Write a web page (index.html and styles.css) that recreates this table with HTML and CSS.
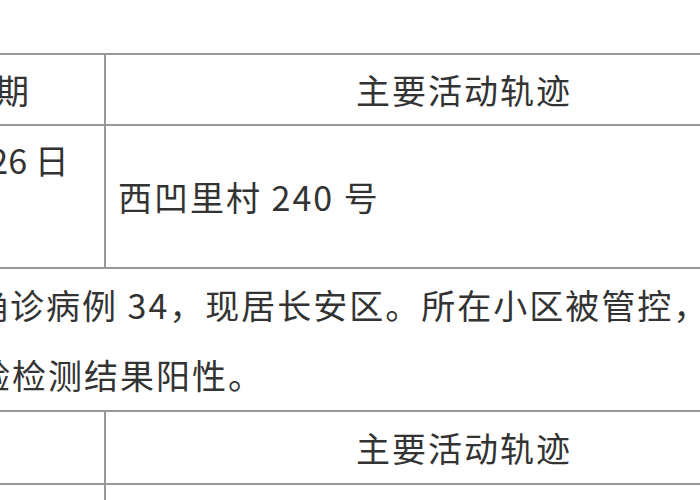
FILE: index.html
```html
<!DOCTYPE html>
<html lang="zh-CN">
<head>
<meta charset="utf-8">
<link rel="stylesheet" href="styles.css">
</head>
<body>
<div class="page">
  <table class="track">
    <colgroup>
      <col class="col-date">
      <col class="col-track">
    </colgroup>
    <tr class="head">
      <th>日期</th>
      <th>主要活动轨迹</th>
    </tr>
    <tr class="entry">
      <td class="date">1 月 26 日</td>
      <td class="place">西凹里村 240 号</td>
    </tr>
    <tr class="note">
      <td colspan="2"><p>确诊病例 34，现居长安区。所在小区被管控，<br>经核验检测结果阳性。</p></td>
    </tr>
    <tr class="head second">
      <th></th>
      <th>主要活动轨迹</th>
    </tr>
    <tr class="entry">
      <td class="date"></td>
      <td class="place"></td>
    </tr>
  </table>
</div>
</body>
</html>
```

FILE: styles.css
```css
html, body {
  margin: 0;
  padding: 0;
  background: #ffffff;
}
.page {
  width: 700px;
  height: 500px;
  overflow: hidden;
  padding-top: 53px;
  box-sizing: border-box;
}
.track {
  margin-left: -116px;
  width: 938px;
  border-collapse: collapse;
  table-layout: fixed;
  font-family: "Noto Sans CJK SC", "Noto Sans", sans-serif;
  font-size: 34px;
  letter-spacing: 2px;
  color: #333333;
}
.col-date { width: 220px; }
.col-track { width: 718px; }
.track th, .track td {
  border: 2px solid #999999;
  padding: 0 12px;
  font-weight: normal;
}
.head { height: 71px; }
.head.second { height: 73px; }
.head th {
  text-align: center;
  vertical-align: middle;
}
.entry { height: 143px; }
.entry .date {
  text-align: center;
  vertical-align: top;
  padding-top: 9px;
  letter-spacing: 0;
}
.entry .place {
  text-align: left;
  vertical-align: middle;
}
.note { height: 142px; }
.note td {
  vertical-align: top;
  padding-left: 18px;
}
.note p {
  margin: 0;
  padding-top: 1px;
  line-height: 70px;
  text-indent: 70px;
}
```
